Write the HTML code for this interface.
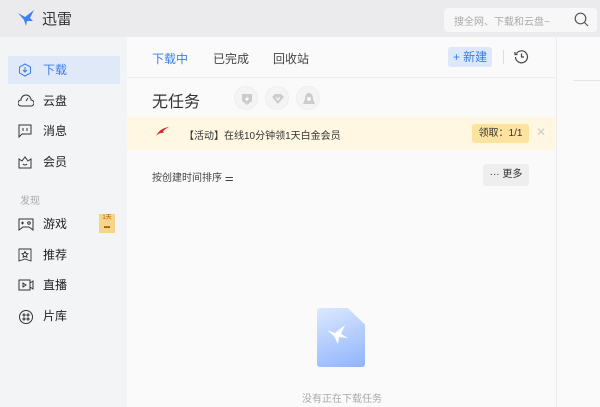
<!DOCTYPE html>
<html><head><meta charset="utf-8"><style>
*{margin:0;padding:0;box-sizing:border-box}
body{width:600px;height:407px;overflow:hidden;font-family:"Liberation Sans","Noto Sans CJK SC",sans-serif;background:#f9f9fa;position:relative;color:#333}
.a{position:absolute}
#top{left:0;top:0;width:600px;height:37px;background:#ebebed}
#side{left:0;top:37px;width:127px;height:370px;background:#f3f4f6}
#main{left:127px;top:37px;width:428px;height:370px;background:#fafafa}
#right{left:556px;top:37px;width:44px;height:370px;background:#fafafa;border-left:1px solid #ececec}
.item{position:absolute;left:8px;width:112px;height:28px;font-size:12px;line-height:28px;padding-left:35px;color:#222}
.item svg{position:absolute;left:10px;top:7px}
.c{position:absolute;width:24px;height:24px;border-radius:50%;border:1px solid #eee;background:#f4f4f4}
.c svg{position:absolute;left:5px;top:5px}
</style></head><body>
<div id="top" class="a">
<svg class="a" style="left:17px;top:9px" width="20" height="18" viewBox="0 0 20 18"><path d="M1 4 L8 8 L17 1 L13 9 L16 12 L10 12 L9 17 L7 11 Z" fill="#3b82f6"/></svg>
<div class="a" style="left:42px;top:8px;font-size:15px;color:#333">迅雷</div>
<div class="a" style="left:444px;top:8px;width:153px;height:24px;background:#f7f7f8;border-radius:4px"></div>
<div class="a" style="left:454px;top:13px;font-size:10px;color:#aaa">搜全网、下载和云盘~</div>
<svg class="a" style="left:574px;top:12px" width="15" height="15" viewBox="0 0 15 15"><circle cx="6.5" cy="6.5" r="5.3" fill="none" stroke="#555" stroke-width="1.2"/><path d="M10.5 10.5L14 14" stroke="#555" stroke-width="1.2"/></svg>
</div>
<div id="side" class="a">
<div class="item" style="top:19px;background:#e0e9f8;color:#3b7ded">
<svg width="14" height="14" viewBox="0 0 14 14"><path d="M7 1L12.5 4v6L7 13 1.5 10V4Z" fill="none" stroke="#3b7ded"/><path d="M7 4v5M5 7l2 2 2-2" fill="none" stroke="#3b7ded"/></svg>下载</div>
<div class="item" style="top:50px"><svg width="16" height="14" viewBox="0 0 16 14"><path d="M3 12 A3 3 0 0 1 3 6 A5 5 0 0 1 13 6 A3 3 0 0 1 13 12Z M8 7 L10 4" fill="none" stroke="#333"/></svg>云盘</div>
<div class="item" style="top:80px"><svg width="14" height="14" viewBox="0 0 14 14"><path d="M1 1h12v9H4l-3 3Z M5 4v3M9 4v3" fill="none" stroke="#333"/></svg>消息</div>
<div class="item" style="top:111px"><svg width="14" height="14" viewBox="0 0 14 14"><path d="M1 4l3 2 3-4 3 4 3-2v9H1Z M5 9q2 2 4 0" fill="none" stroke="#333"/></svg>会员</div>
<div class="a" style="left:20px;top:155px;font-size:10px;color:#aaa">发现</div>
<div class="item" style="top:173px"><svg width="16" height="14" viewBox="0 0 16 14"><path d="M1 2h14v11l-4-3H5l-4 3Z M3 6h3M4.5 4.5v3" fill="none" stroke="#333"/><circle cx="11" cy="6" r="1.3" fill="none" stroke="#333"/></svg>游戏</div>
<div class="a" style="left:99px;top:177px;width:16px;height:19px;background:#f6d58b;font-size:6px;color:#b45a00;text-align:center;line-height:9px">1天<br>▬</div>
<div class="item" style="top:204px"><svg width="14" height="14" viewBox="0 0 14 14"><path d="M1 1h12v12l-6-2-6 2Z M7 3.5l1 2 2 .3-1.5 1.4.4 2.1L7 8.3 5.1 9.3l.4-2.1L4 5.8l2-.3Z" fill="none" stroke="#333" stroke-width=".9"/></svg>推荐</div>
<div class="item" style="top:234px"><svg width="16" height="14" viewBox="0 0 16 14"><path d="M1 2h11v10H1Z M12 5l3-2v8l-3-2 M5 5v4l3-2Z" fill="none" stroke="#333"/></svg>直播</div>
<div class="item" style="top:265px"><svg width="16" height="16" viewBox="0 0 16 16"><circle cx="8" cy="8" r="6.5" fill="none" stroke="#333"/><circle cx="6" cy="6" r="1" fill="none" stroke="#333"/><circle cx="10" cy="6" r="1" fill="none" stroke="#333"/><circle cx="6" cy="10" r="1" fill="none" stroke="#333"/><circle cx="10" cy="10" r="1" fill="none" stroke="#333"/></svg>片库</div>
</div>
<div id="main" class="a">
<div class="a" style="left:25px;top:13px;font-size:12px;color:#3b7ded">下载中</div>
<div class="a" style="left:86px;top:13px;font-size:12px;color:#444">已完成</div>
<div class="a" style="left:146px;top:13px;font-size:12px;color:#444">回收站</div>
<div class="a" style="left:321px;top:10px;width:44px;height:20px;background:#dde8fb;border-radius:3px;font-size:12px;color:#3b7ded;line-height:20px;text-align:center">+ 新建</div>
<div class="a" style="left:376px;top:13px;width:1px;height:14px;background:#ddd"></div>
<svg class="a" style="left:387px;top:12px" width="15" height="15" viewBox="0 0 15 15"><path d="M2.5 4.5A6 6 0 1 1 1.5 8 M1 3v2.5h2.5 M7.5 4.5v3.5h2.5" fill="none" stroke="#444" stroke-width="1.2"/></svg>
<div class="a" style="left:0;top:40px;width:428px;height:1px;background:#ececec"></div>
<div class="a" style="left:25px;top:51px;font-size:16px;color:#333">无任务</div>
<div class="c" style="left:107px;top:49px"><svg width="14" height="14" viewBox="0 0 14 14"><path d="M2 2h10v7l-5 4-5-4Z" fill="#ccc"/><path d="M8 3L5 8h2l-1 3 3-5H7Z" fill="#fff"/></svg></div>
<div class="c" style="left:138px;top:49px"><svg width="14" height="14" viewBox="0 0 14 14"><path d="M1 5l3-3h6l3 3-6 7Z" fill="#ccc"/><path d="M5 5l2 3 2-3" fill="none" stroke="#fff"/></svg></div>
<div class="c" style="left:169px;top:49px"><svg width="14" height="14" viewBox="0 0 14 14"><path d="M7 1C4 1 3 4 3 7L1 12h12l-2-5c0-3-1-6-4-6Z" fill="#ccc"/><circle cx="7" cy="7" r="2" fill="#fff"/></svg></div>
<div class="a" style="left:0;top:80px;width:428px;height:33px;background:#fff7e2"></div>
<svg class="a" style="left:28px;top:89px" width="15" height="13" viewBox="0 0 15 13"><path d="M14 1 Q5 2 1 10 Q5 6 9 7 Q6 5 14 1Z" fill="#d9252b"/></svg>
<div class="a" style="left:57px;top:90px;font-size:10px;color:#333">【活动】在线10分钟领1天白金会员</div>
<div class="a" style="left:345px;top:87px;width:57px;height:19px;background:#fde3a0;border-radius:3px;font-size:10px;line-height:19px;text-align:center;color:#333">领取：1/1</div>
<div class="a" style="left:409px;top:88px;font-size:12px;color:#ccc">✕</div>
<div class="a" style="left:25px;top:132px;font-size:10px;color:#444">按创建时间排序 ⚌</div>
<div class="a" style="left:356px;top:127px;width:46px;height:22px;background:#eeeeef;border-radius:3px;font-size:10px;line-height:22px;text-align:center;color:#333">··· 更多</div>
<div class="a" style="left:190px;top:271px;width:48px;height:59px;border-radius:3px;background:linear-gradient(160deg,#dce8ff,#8fb4fb);clip-path:polygon(0 0,64% 0,100% 28%,100% 100%,0 100%)"></div>
<svg class="a" style="left:199px;top:287px" width="24" height="20" viewBox="0 0 24 20"><path d="M1 6 L9 9 L19 1 L15 10 L22 14 L13 13 L12 20 L8 12 Z" fill="#fff"/></svg>
<div class="a" style="left:175px;top:353px;font-size:10px;color:#aaa">没有正在下载任务</div>
</div>
<div id="right" class="a"><div class="a" style="left:16px;top:43px;width:28px;height:1px;background:#e5e5e5"></div></div>
</body></html>
